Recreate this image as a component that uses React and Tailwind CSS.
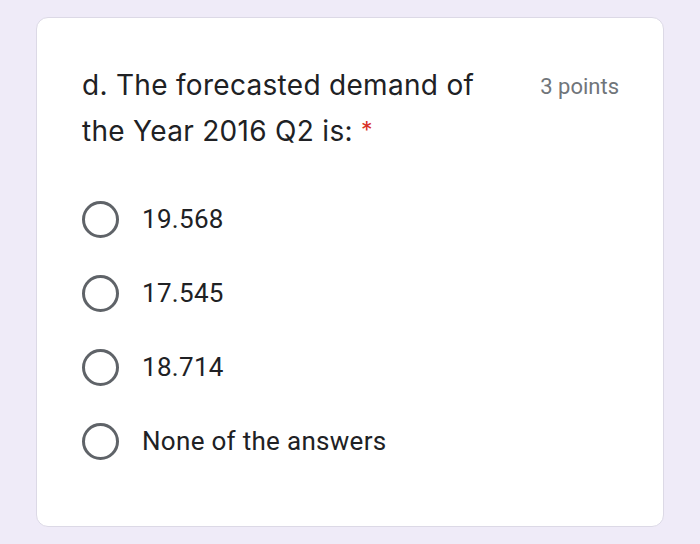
import React from 'react';

const options = ['19.568', '17.545', '18.714', 'None of the answers'];

function Radio() {
  return (
    <span className="w-[37px] h-[37px] rounded-full border-[3.5px] border-[#5f6368] shrink-0"></span>
  );
}

export default function App() {
  return (
    <div className="w-[700px] h-[544px] bg-[#efebf8] pt-[17px] pl-[36px]" style={{ fontFamily: 'Roboto, sans-serif' }}>
      <div className="w-[628px] h-[510px] bg-white rounded-[12px] border border-[#dcd9e6] pl-[45px] pr-[44px] pt-[44px]">
        <div className="flex justify-between items-start">
          <h1 className="text-[28px] leading-[46px] text-[#202124] tracking-[0.3px]" style={{ fontFamily: 'Inter, sans-serif' }}>
            d. The forecasted demand of
            <br />
            the Year 2016 Q2 is:
            <span className="text-[#d93025] text-[23px] leading-[0] ml-[8px] relative top-[-3px]">*</span>
          </h1>
          <span className="text-[22px] leading-[46px] text-[#70757a] mt-[2px]">3 points</span>
        </div>
        <div className="flex flex-col mt-[47px] gap-[37px]">
          {options.map((opt) => (
            <label key={opt} className="flex items-center gap-[23px] h-[37px]">
              <Radio />
              <span className="text-[26px] text-[#202124] tracking-[0.3px]">{opt}</span>
            </label>
          ))}
        </div>
      </div>
    </div>
  );
}
